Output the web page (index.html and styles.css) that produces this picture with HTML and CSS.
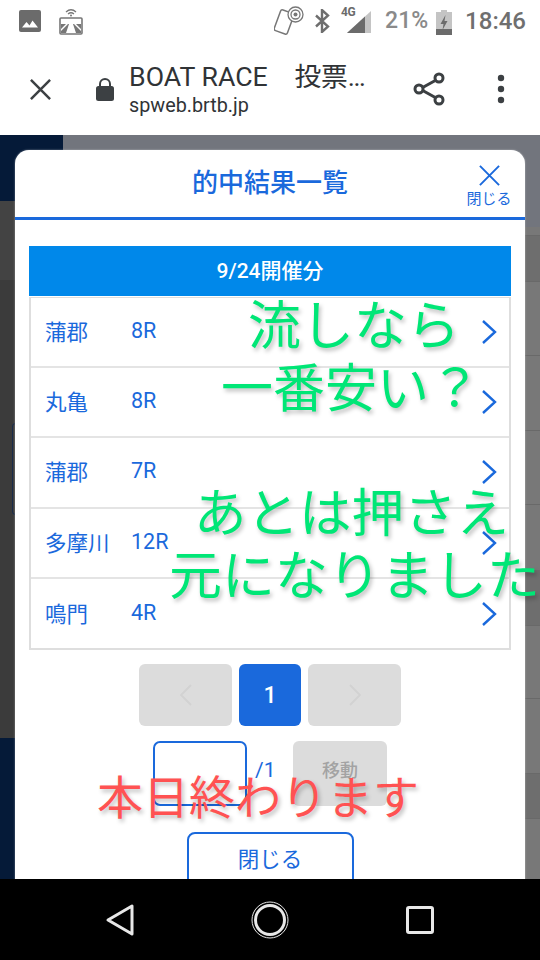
FILE: index.html
```html
<!DOCTYPE html>
<html lang="ja">
<head>
<meta charset="utf-8">
<title>的中結果一覧</title>
<link rel="stylesheet" href="styles.css">
</head>
<body>
<div class="phone">
  <header class="status">
    <div class="status-left">
      <svg class="i-image" viewBox="0 0 22 22"><rect width="22" height="22" rx="2" fill="#6b6b6b"/><path d="M3 17.500l4.500-5.500 3 3.500 3-5 5.500 7z" fill="#fff"/></svg>
      <svg class="i-cast" viewBox="0 0 24 27"><path d="M7 4q5-4.500 10 0M9 6q3-2.500 6 0" fill="none" stroke="#777" stroke-width="1.300"/><circle cx="12" cy="7.500" r="1" fill="#777"/><rect x="1" y="10" width="22" height="16" rx="1" fill="#fff" stroke="#777" stroke-width="1.600"/><path d="M2 16h5l-5 5zM22 16h-5l5 5zM2 23l7-7h1l-3 9H2zM22 23l-7-7h-1l3 9h5z" fill="#777"/></svg>
    </div>
    <div class="status-right">
      <svg class="i-nfc" viewBox="0 0 30 30"><rect x="3" y="5" width="14" height="22" rx="2" transform="rotate(20 10 16)" fill="none" stroke="#777" stroke-width="1.500"/><circle cx="21.500" cy="8.500" r="7.500" fill="#fff" stroke="#777" stroke-width="1.300"/><circle cx="21.500" cy="8.500" r="4.500" fill="none" stroke="#777" stroke-width="1.300"/><circle cx="21.500" cy="8.500" r="2" fill="#777"/></svg>
      <svg class="i-bt" viewBox="0 0 16 24"><path d="M2 6.500l12 11-6 5.500V1l6 5.500-12 11" fill="none" stroke="#6e6e6e" stroke-width="2.400"/></svg>
      <div class="signal">
        <span class="net">4G</span>
        <svg class="i-signal" viewBox="0 0 24 22"><path d="M24 0v22H0z" fill="#c4c4c4"/><path d="M18 5.500V22H0z" fill="#6b6b6b"/></svg>
      </div>
      <span class="pct">21%</span>
      <svg class="i-batt" viewBox="0 0 16 25"><path d="M5 0h6v2h5v23H0V2h5z" fill="#c4c4c4"/><path d="M0 19h16v6H0z" fill="#6b6b6b"/><path d="M9.500 5L4.500 14h3l-1 6 5-9h-3z" fill="#6b6b6b"/></svg>
      <span class="clock">18:46</span>
    </div>
  </header>

  <nav class="toolbar">
    <svg class="i-x" viewBox="0 0 24 24"><path d="M2 2l20 20M22 2L2 22" stroke="#3c4043" stroke-width="2.600" fill="none"/></svg>
    <svg class="i-lock" viewBox="0 0 18 24"><path d="M4 10V7a5 5 0 0 1 10 0v3" fill="none" stroke="#3c4043" stroke-width="2"/><rect y="9" width="18" height="15" rx="2.500" fill="#3c4043"/></svg>
    <div class="addr">
      <div class="addr-title">BOAT RACE　投票…</div>
      <div class="addr-url">spweb.brtb.jp</div>
    </div>
    <svg class="i-share" viewBox="0 0 32 34"><path d="M25 7L7 17l18 10" fill="none" stroke="#3c4043" stroke-width="3"/><circle cx="26" cy="6" r="4" fill="#fff" stroke="#3c4043" stroke-width="3"/><circle cx="6" cy="17" r="4" fill="#fff" stroke="#3c4043" stroke-width="3"/><circle cx="26" cy="28" r="4" fill="#fff" stroke="#3c4043" stroke-width="3"/></svg>
    <svg class="i-dots" viewBox="0 0 8 30"><circle cx="4" cy="4" r="3.200" fill="#3c4043"/><circle cx="4" cy="15" r="3.200" fill="#3c4043"/><circle cx="4" cy="26" r="3.200" fill="#3c4043"/></svg>
  </nav>

  <main class="stage">
    <div class="backdrop">
      <div class="bd-left">
        <div class="bd-navy"></div>
        <div class="bd-dark-a"></div>
        <div class="bd-dark-b"><div class="bd-tab"></div></div>
        <div class="bd-navy-fill"></div>
      </div>
      <div class="bd-right">
        <div class="bd-head"></div>
        <div class="bd-seg"></div>
        <div class="bd-seg bd-shade"></div>
        <div class="bd-seg"></div>
        <div class="bd-seg"></div>
        <div class="bd-seg"></div>
        <div class="bd-plain"></div>
        <div class="bd-seg bd-shade"></div>
        <div class="bd-seg"></div>
        <div class="bd-seg"></div>
        <div class="bd-seg bd-shade"></div>
        <div class="bd-plain"></div>
      </div>
    </div>

    <section class="modal">
      <div class="modal-head">
        <h1 class="modal-title">的中結果一覧</h1>
        <div class="modal-close">
          <svg class="i-close" viewBox="0 0 24 24"><path d="M2 2l20 20M22 2L2 22" stroke="#1a69dc" stroke-width="2" fill="none"/></svg>
          <span class="close-label">閉じる</span>
        </div>
      </div>
      <div class="modal-body">
        <div class="day">9/24開催分</div>
        <ul class="races">
          <li class="race"><span class="place">蒲郡</span><span class="num">8R</span><svg class="chev" viewBox="0 0 16 26"><path d="M2 2l12 11L2 24" fill="none" stroke="#1a69dc" stroke-width="2.400"/></svg></li>
          <li class="race"><span class="place">丸亀</span><span class="num">8R</span><svg class="chev" viewBox="0 0 16 26"><path d="M2 2l12 11L2 24" fill="none" stroke="#1a69dc" stroke-width="2.400"/></svg></li>
          <li class="race"><span class="place">蒲郡</span><span class="num">7R</span><svg class="chev" viewBox="0 0 16 26"><path d="M2 2l12 11L2 24" fill="none" stroke="#1a69dc" stroke-width="2.400"/></svg></li>
          <li class="race"><span class="place">多摩川</span><span class="num">12R</span><svg class="chev" viewBox="0 0 16 26"><path d="M2 2l12 11L2 24" fill="none" stroke="#1a69dc" stroke-width="2.400"/></svg></li>
          <li class="race"><span class="place">鳴門</span><span class="num">4R</span><svg class="chev" viewBox="0 0 16 26"><path d="M2 2l12 11L2 24" fill="none" stroke="#1a69dc" stroke-width="2.400"/></svg></li>
        </ul>
        <div class="pager">
          <div class="pg pg-off"><svg class="pg-chev" viewBox="0 0 14 24"><path d="M12 2L2 12l10 10" fill="none" stroke="#d2d2d2" stroke-width="1.800"/></svg></div>
          <div class="pg pg-on">1</div>
          <div class="pg pg-off"><svg class="pg-chev" viewBox="0 0 14 24"><path d="M2 2l10 10L2 22" fill="none" stroke="#d2d2d2" stroke-width="1.800"/></svg></div>
        </div>
        <div class="jump">
          <div class="jump-input"></div>
          <span class="jump-total">/1</span>
          <div class="jump-go">移動</div>
        </div>
        <div class="close-btn">閉じる</div>
      </div>
    </section>

    <div class="cap cap-1">流しなら</div>
    <div class="cap cap-2">一番安い？</div>
    <div class="cap cap-3">あとは押さえ</div>
    <div class="cap cap-4">元になりました</div>
    <div class="cap cap-5">本日終わります</div>
  </main>

  <footer class="navbar">
    <svg class="i-back" viewBox="0 0 30 34"><path d="M27 3v28L3 17z" fill="none" stroke="#e8e8e8" stroke-width="3" stroke-linejoin="round"/></svg>
    <svg class="i-home" viewBox="0 0 38 38"><circle cx="19" cy="19" r="18" fill="none" stroke="#e8e8e8" stroke-width="1"/><circle cx="19" cy="19" r="14.500" fill="none" stroke="#e8e8e8" stroke-width="3"/></svg>
    <svg class="i-recent" viewBox="0 0 28 28"><rect x="1.500" y="1.500" width="25" height="25" rx="1.500" fill="none" stroke="#e8e8e8" stroke-width="3"/></svg>
  </footer>
</div>
</body>
</html>
```

FILE: styles.css
```css
* { box-sizing: border-box; }
html, body { margin: 0; padding: 0; }
body { width: 540px; height: 960px; overflow: hidden; background: #000; font-family: Roboto, "Noto Sans CJK JP", sans-serif; }
svg { display: block; flex: none; }
ul { list-style: none; margin: 0; padding: 0; }
h1 { margin: 0; }

.phone { width: 540px; height: 960px; display: flex; flex-direction: column; }

/* status bar */
.status { height: 45px; flex: none; background: #fff; display: flex; justify-content: space-between; align-items: center; padding: 0 14px 3px 19px; color: #777; }
.status-left { display: flex; align-items: center; gap: 18px; }
.i-image { width: 22px; height: 22px; }
.i-cast { width: 24px; height: 27px; }
.status-right { display: flex; align-items: center; }
.i-nfc { width: 30px; height: 30px; margin-right: 10px; }
.i-bt { width: 16px; height: 24px; margin-right: 11px; }
.signal { position: relative; width: 30px; height: 24px; margin-right: 14px; }
.net { position: absolute; left: 0; top: -3px; font-size: 12px; font-weight: 700; line-height: 12px; color: #6b6b6b; letter-spacing: -.5px; }
.i-signal { position: absolute; right: 0; bottom: 0; width: 24px; height: 22px; }
.pct { font-size: 23px; line-height: 28px; font-weight: 500; color: #8a8a8a; width: 44px; white-space: nowrap; }
.i-batt { width: 16px; height: 25px; margin: 2px 13px 0 7px; }
.clock { font-size: 24px; line-height: 28px; font-weight: 500; color: #6f6f6f; }

/* toolbar */
.toolbar { height: 90px; flex: none; background: #fff; display: flex; align-items: center; padding: 0 35px 0 29px; }
.i-x { width: 23px; height: 23px; margin-right: 44px; margin-top: -2px; }
.i-lock { width: 18px; height: 24px; margin-right: 15px; margin-top: -2px; }
.addr { flex: 1; min-width: 0; margin-top: -1px; }
.addr-title { font-size: 26.700px; line-height: 32px; color: #303336; white-space: nowrap; }
.addr-url { font-size: 19.800px; line-height: 25px; color: #303336; }
.i-share { width: 32px; height: 34px; margin-right: 52px; margin-top: -2px; }
.i-dots { width: 8px; height: 30px; margin-top: -2px; }

/* page behind the dialog */
.stage { position: relative; flex: 1; min-height: 0; overflow: hidden; background: #777; }
.backdrop { height: 100%; display: flex; }
.bd-left { width: 63px; flex: none; height: 100%; display: flex; flex-direction: column; }
.bd-navy { height: 66px; flex: none; background: #051a38; }
.bd-dark-a { height: 79px; flex: none; background: #434343; }
.bd-dark-b { height: 458px; flex: none; background: #3b3b3b; position: relative; }
.bd-tab { position: absolute; left: 12px; top: 143px; width: 4px; height: 92px; border: 1px solid #1a2c4a; border-right: 0; border-radius: 4px 0 0 4px; }
.bd-navy-fill { flex: 1; background: #051a38; }
.bd-right { flex: 1; display: grid; grid-template-rows: 92px 9px 46px 74px 75px 74px 65px 56px 73px 75px 45px 1fr; background: #787878; }
.bd-head { background: #72757d; }
.bd-seg { border-bottom: 1px solid #696969; }
.bd-shade { background: #6e6e6e; }

/* dialog */
.modal { position: absolute; left: 15px; top: 15px; width: 510px; height: 760px; background: #fff; border-radius: 14px 14px 0 0; box-shadow: 0 0 2px rgba(255,255,255,.5); }
.modal-head { position: relative; height: 70px; border-bottom: 3px solid #1a69dc; display: flex; align-items: center; justify-content: center; }
.modal-title { font-size: 26px; line-height: 32px; font-weight: 500; color: #1a69dc; margin-top: -2px; }
.modal-close { position: absolute; right: 14px; top: 14px; width: 44px; display: flex; flex-direction: column; align-items: center; }
.i-close { width: 23px; height: 23px; }
.close-label { font-size: 15px; line-height: 18px; color: #1a69dc; margin-top: 3px; white-space: nowrap; }

.modal-body { padding: 26px 14px 0; display: flex; flex-direction: column; }
.day { height: 50px; background: #0088ea; color: #fff; font-size: 21px; font-weight: 500; line-height: 50px; text-align: center; }
.races { border: 2px solid #dedede; border-top-width: 1px; margin-top: 1px; }
.race { height: 70.200px; display: flex; align-items: center; padding: 0 12px 0 14px; border-bottom: 2px solid #e4e4e4; color: #1a69dc; font-size: 21.500px; }
.race:last-child { border-bottom: 0; height: 69.500px; }
.place { width: 86px; white-space: nowrap; margin-top: -3px; }
.num { flex: 1; margin-top: -3px; }
.chev { width: 16px; height: 26px; }

.pager { display: flex; justify-content: center; gap: 7px; margin-top: 14px; }
.pg { height: 62px; border-radius: 6px; display: flex; align-items: center; justify-content: center; }
.pg-off { width: 93px; background: #dcdcdc; }
.pg-on { width: 62px; background: #1a69dc; color: #fff; font-size: 23px; font-weight: 500; }
.pg-chev { width: 14px; height: 24px; }

.jump { display: flex; align-items: flex-start; margin: 15px 0 0 124px; }
.jump-input { width: 94px; height: 65px; border: 2px solid #1a69dc; border-radius: 7px; background: #fff; }
.jump-total { width: 46px; padding: 16px 0 0 8px; font-size: 21px; line-height: 26px; color: #1a69dc; }
.jump-go { width: 94px; height: 65px; background: #dcdcdc; border-radius: 6px; color: #a3a3a3; font-size: 18px; font-weight: 500; line-height: 60px; text-align: center; }

.close-btn { width: 167px; height: 64px; margin: 26px auto 0; border: 2px solid #1a69dc; border-radius: 8px; color: #1a69dc; font-size: 21.500px; line-height: 52px; text-align: center; background: #fff; }

/* captions painted over the screenshot */
.cap { position: absolute; white-space: nowrap; font-family: "Noto Sans CJK JP", sans-serif; font-weight: 400; text-shadow: 2px 3px 4px rgba(0,0,0,.25); color: #00e676; line-height: 70px; }
.cap-1 { left: 248px; top: 152px; font-size: 53px; }
.cap-2 { left: 221px; top: 215px; font-size: 52px; }
.cap-3 { left: 194px; top: 339px; font-size: 52.500px; }
.cap-4 { left: 169px; top: 402px; font-size: 53px; }
.cap-5 { left: 97px; top: 624px; font-size: 46px; color: #ff5252; }

/* navigation bar */
.navbar { height: 81px; flex: none; background: #000; display: flex; align-items: center; position: relative; padding-left: 105px; }
.i-back { width: 30px; height: 34px; margin-right: 116px; }
.i-home { width: 38px; height: 38px; margin-right: 117px; }
.i-recent { width: 28px; height: 28px; }
```
